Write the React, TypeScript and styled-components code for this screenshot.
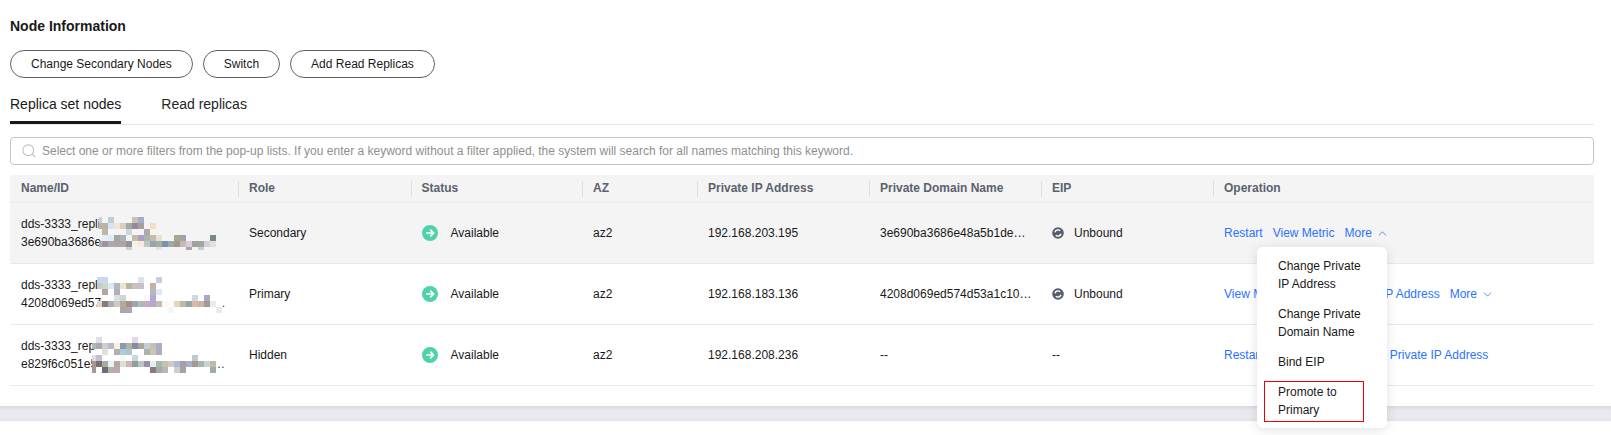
import React from "react";
import styled, { createGlobalStyle } from "styled-components";
import { ChevronDown, ChevronUp } from "lucide-react";

const GlobalStyle = createGlobalStyle`
  html, body {
    margin: 0;
    padding: 0;
    background: #fff;
    font-family: "Liberation Sans", Arial, sans-serif;
    font-size: 12px;
    color: #191919;
  }
`;

const mosaicOne = [
  "c8d0d8 - c0ccd6 - - - cbbfb8 a0acd0",
  "b4b4a8 b4b4a8 d2e4f6 f3e4d6 d8cfba a8a8a2 978a98 a59f9a - f2dfc6",
  "- bdb6a8 - - - ccd6de - - aaaaaa",
  "- e8eef5 e0ecf4 a8a4a0 a8b4b8 - cbb8a8 aaa0c0 aab4b0 c8bba8 e8dfd6 - - a8a890 a8a0a8 - - - - 7a8a88",
  "a8b0b8 a090a0 b0a8a8 b0a4a4 b0a4a4 8e94a4 f4f2e4 f2ece0 c0c4bc 9ca0b4 a0b0a0 7a90b4 a0a8a8 a09888 c8b8b8 d8d0d0 a0a0a0 a0a89a d0d0e0 e0e4dc",
  "- - - - - d0d4c8 - - - - efe0d8 - - - - b0a0b8 - c0d0dc",
];

const mosaicTwo = [
  "c8d8f0 c8d8f0 - - - - - dce0f0 - - c8cce0",
  "c8ccc0 d0d4c8 d8e8f8 b0b8c0 efe4c8 b0b8a8 ccc0b8 c8c0c0 - c8b0a8",
  "- b0a8a0 - b0b0b0 - - - - - b8b8b8 e0e8f8",
  "- - - d8e0e8 c8d8d8 - - - fbf8f8 b0a8d8 - - - - - - d0d8e0 - a8a8c0",
  "e0d8d0 8a7a78 a8b0b8 d0c8c0 b8a898 a89080 98a8b0 b0b8b8 c8a8c8 b8a8c8 c0c0b8 f8f8f4 fffdf5 e8d8b8 c0b8a8 98a8a0 e0b8a0 c0b8a8 a89890 e8ecf0",
  "- - - - a8a8a8 a8a8b8 - - - - - - f0f8ff - - - - - - - e8ece8",
];

const mosaicThree = [
  "- dce0e4 - - - - - e0d8e4",
  "b0b8b0 a8aca8 d0ccd0 b8b8c8 fdeedc 8a9ca4 a8b8a8 8a8aa8 a8a8a0 c0d0d8 c8c0b8 a8aec8",
  "- - e4e0d8 - b0b0b0 a8cce8 b8c0c8 - - b0b0b0 cbc4b4 a8b0c0",
  "d8dcec c0c0d4 - - - fff8e8 - c8d8e0 - - - - - - - - - c0c8d0",
  "a89890 7a7070 a8ac98 e4f4fa b8a8a0 d0e4d8 d8b0b8 90a090 c0c0c8 9890a8 e4f0f0 a8b8a8 c0c4b0 d8c8b8 a8bcdc a8a0a8 a8b0c4 a89890 a8b8b0 c8d4d0 c0bca0",
  "a89898 - 706880 b8b0a0 c0a8b0 - - - - - 907880 a8a8a8 b0b8c0 - d0d0c8 a0a4a4 - - - - a0aca8",
];

const rows = [
  {
    name: "dds-3333_repli",
    id: "3e690ba3686e",
    tail: "",
    mosaic: mosaicOne,
    shift: -3,
    left: 89,
    top: 14,
    height: 33,
    role: "Secondary",
    ip: "192.168.203.195",
    domain: "3e690ba3686e48a5b1de…",
    eip: "Unbound",
    links: ["Restart", "View Metric"],
    more: "open",
  },
  {
    name: "dds-3333_repl",
    id: "4208d069ed57",
    tail: ".",
    mosaic: mosaicTwo,
    shift: -1,
    left: 87,
    top: 13,
    height: 36,
    role: "Primary",
    ip: "192.168.183.136",
    domain: "4208d069ed574d53a1c10…",
    eip: "Unbound",
    links: ["View Metric", "Change Private IP Address"],
    more: "closed",
  },
  {
    name: "dds-3333_rep",
    id: "e829f6c051e5",
    tail: "…",
    mosaic: mosaicThree,
    shift: -2,
    left: 82,
    top: 12,
    height: 36,
    role: "Hidden",
    ip: "192.168.208.236",
    domain: "--",
    eip: "--",
    links: ["Restart", "View Metric", "Change Private IP Address"],
    more: "none",
  },
];

const headers = ["Name/ID", "Role", "Status", "AZ", "Private IP Address", "Private Domain Name", "EIP", "Operation"];

const SearchIcon = () => (
  <svg width="14" height="14" viewBox="0 0 14 14" fill="none" stroke="#c2c2c2" strokeWidth="1.1">
    <circle cx="6.3" cy="6.3" r="5.4" />
    <path d="M10.2 10.2 13 13" />
  </svg>
);

const AvailableIcon = () => (
  <svg width="16" height="16" viewBox="0 0 16 16">
    <circle cx="8" cy="8" r="8" fill="#4fd2aa" />
    <path d="M4 8h7.4M8.2 4.6 11.6 8l-3.4 3.4" fill="none" stroke="#fff" strokeWidth="1.7" />
  </svg>
);

const UnboundIcon = () => (
  <svg width="12" height="12" viewBox="0 0 12 12">
    <circle cx="6" cy="6" r="5.8" fill="#585d6e" />
    <path d="M3 5.2a3.1 3.1 0 0 1 5.2-1.4M9 6.8a3.1 3.1 0 0 1-5.2 1.4" fill="none" stroke="#fff" strokeWidth="1.4" />
  </svg>
);

const NameMosaic = ({ data, shift, left, top, height }: { data: string[]; shift: number; left: number; top: number; height: number }) => (
  <Mosaic $left={left} $top={top} width="130" height={height} viewBox={`0 0 130 ${height}`} shapeRendering="crispEdges">
    {data.map((line, y) =>
      line.split(" ").map((color, x) =>
        color === "-" ? null : <rect key={`${y}-${x}`} x={x * 6 + shift} y={y * 6} width="6" height="6" fill={`#${color}`} />
      )
    )}
  </Mosaic>
);

export default function App() {
  return (
    <>
      <GlobalStyle />
      <Page>
        <Title>Node Information</Title>
        <Actions>
          <PillButton>Change Secondary Nodes</PillButton>
          <PillButton>Switch</PillButton>
          <PillButton>Add Read Replicas</PillButton>
        </Actions>
        <Tabs>
          <Tab $active>Replica set nodes</Tab>
          <Tab>Read replicas</Tab>
        </Tabs>
        <SearchBox>
          <SearchIcon />
          <Placeholder>
            Select one or more filters from the pop-up lists. If you enter a keyword without a filter applied, the system will search for all names matching this keyword.
          </Placeholder>
        </SearchBox>
        <Table>
          <HeaderRow>
            {headers.map((h, i) => (
              <HeaderCell key={h} $first={i === 0}>
                {h}
              </HeaderCell>
            ))}
          </HeaderRow>
          {rows.map((row, i) => (
            <Row key={row.id} $highlight={i === 0}>
              <NameCell>
                <NameLine>{row.name}</NameLine>
                <NameLine>
                  {row.id}
                  <Tail>{row.tail}</Tail>
                </NameLine>
                <NameMosaic data={row.mosaic} shift={row.shift} left={row.left} top={row.top} height={row.height} />
              </NameCell>
              <Cell>{row.role}</Cell>
              <Cell>
                <AvailableIcon />
                <StatusText>Available</StatusText>
              </Cell>
              <Cell>az2</Cell>
              <Cell>{row.ip}</Cell>
              <Cell>{row.domain}</Cell>
              <Cell>
                {row.eip === "Unbound" ? (
                  <>
                    <UnboundIcon />
                    <EipText>Unbound</EipText>
                  </>
                ) : (
                  row.eip
                )}
              </Cell>
              <OperationCell>
                {row.links.map((l) => (
                  <OpLink key={l}>{l}</OpLink>
                ))}
                {row.more !== "none" && (
                  <OpLink>
                    More
                    {row.more === "open" ? <ChevronUp size={13} strokeWidth={1.5} /> : <ChevronDown size={13} strokeWidth={1.5} />}
                  </OpLink>
                )}
                {row.more === "open" && (
                  <Menu>
                    <MenuItem>Change Private IP Address</MenuItem>
                    <MenuItem>Change Private Domain Name</MenuItem>
                    <MenuItem>Bind EIP</MenuItem>
                    <MenuItem $marked>Promote to Primary</MenuItem>
                  </Menu>
                )}
              </OperationCell>
            </Row>
          ))}
        </Table>
      </Page>
      <Band />
      <Footer />
    </>
  );
}

const Page = styled.div`
  height: 406px;
  box-sizing: border-box;
  padding: 17px 17px 0 10px;
`;

const Title = styled.div`
  font-size: 14px;
  font-weight: 700;
  line-height: 18px;
`;

const Actions = styled.div`
  display: flex;
  gap: 10px;
  margin-top: 15px;
`;

const PillButton = styled.button`
  height: 28px;
  padding: 0 20px;
  border: 1px solid #5f5f5f;
  border-radius: 14px;
  background: #fff;
  color: #191919;
  font-family: inherit;
  font-size: 12px;
`;

const Tabs = styled.div`
  display: flex;
  gap: 40px;
  margin-top: 16px;
  border-bottom: 1px solid #e8e8e8;
`;

const Tab = styled.div<{ $active?: boolean }>`
  font-size: 14px;
  line-height: 20px;
  padding-bottom: 7px;
  border-bottom: 3px solid ${(p) => (p.$active ? "#191919" : "transparent")};
  color: ${(p) => (p.$active ? "#191919" : "#252525")};
`;

const SearchBox = styled.div`
  display: flex;
  align-items: center;
  gap: 6px;
  height: 28px;
  box-sizing: border-box;
  margin-top: 12px;
  padding-left: 11px;
  border: 1px solid #c4c4c4;
  border-radius: 4px;
`;

const Placeholder = styled.span`
  color: #8f8f8f;
  white-space: nowrap;
`;

const Table = styled.div`
  margin-top: 10px;
`;

const columns = "228px 172.5px 171.5px 115px 172px 172px 172px 381px";

const HeaderRow = styled.div`
  display: grid;
  grid-template-columns: ${columns};
  height: 28px;
  background: #f4f4f4;
  border-bottom: 1px solid #ececec;
  box-sizing: border-box;
`;

const HeaderCell = styled.div<{ $first?: boolean }>`
  position: relative;
  display: flex;
  align-items: center;
  padding: 0 0 1px 11px;
  font-weight: 700;
  color: #5c616d;

  &::before {
    content: "";
    display: ${(p) => (p.$first ? "none" : "block")};
    position: absolute;
    left: 0;
    top: 6px;
    width: 1px;
    height: 16px;
    background: #dfdfdf;
  }
`;

const Row = styled.div<{ $highlight?: boolean }>`
  display: grid;
  grid-template-columns: ${columns};
  height: 61px;
  box-sizing: border-box;
  border-bottom: 1px solid #e9e9e9;
  background: ${(p) => (p.$highlight ? "#f4f4f4" : "#fff")};
`;

const Cell = styled.div`
  display: flex;
  align-items: center;
  min-width: 0;
  padding-left: 11px;
  white-space: nowrap;
`;

const NameCell = styled.div`
  position: relative;
  display: flex;
  flex-direction: column;
  justify-content: center;
  padding-left: 11px;
`;

const NameLine = styled.div`
  display: flex;
  justify-content: space-between;
  width: 204px;
  line-height: 18px;
`;

const Tail = styled.span`
  color: #444;
`;

const Mosaic = styled.svg<{ $left: number; $top: number }>`
  position: absolute;
  left: ${(p) => p.$left}px;
  top: ${(p) => p.$top}px;
`;

const StatusText = styled.span`
  margin-left: 13px;
`;

const EipText = styled.span`
  margin-left: 10px;
`;

const OperationCell = styled(Cell)`
  position: relative;
  gap: 10px;
`;

const OpLink = styled.a`
  display: inline-flex;
  align-items: center;
  gap: 4px;
  color: #2b73ff;
  white-space: nowrap;
`;

const Menu = styled.div`
  position: absolute;
  left: 44px;
  top: 44px;
  z-index: 5;
  display: flex;
  flex-direction: column;
  gap: 12px;
  width: 130px;
  box-sizing: border-box;
  padding: 10px 21px 9px;
  background: #fff;
  border-radius: 6px;
  box-shadow: 0 2px 12px rgba(0, 0, 0, 0.12);
  white-space: normal;
`;

const MenuItem = styled.div<{ $marked?: boolean }>`
  position: relative;
  line-height: 18px;

  &::after {
    content: "";
    display: ${(p) => (p.$marked ? "block" : "none")};
    position: absolute;
    left: -14px;
    top: -2px;
    width: 98px;
    height: 39px;
    border: 1.5px solid #f00000;
  }
`;

const Band = styled.div`
  height: 15px;
  background: linear-gradient(#d8d8de 0, #e8e9ee 4px, #e9eaef 11px, #e2e3e8 100%);
`;

const Footer = styled.div`
  height: 14px;
  background: #fff;
`;
